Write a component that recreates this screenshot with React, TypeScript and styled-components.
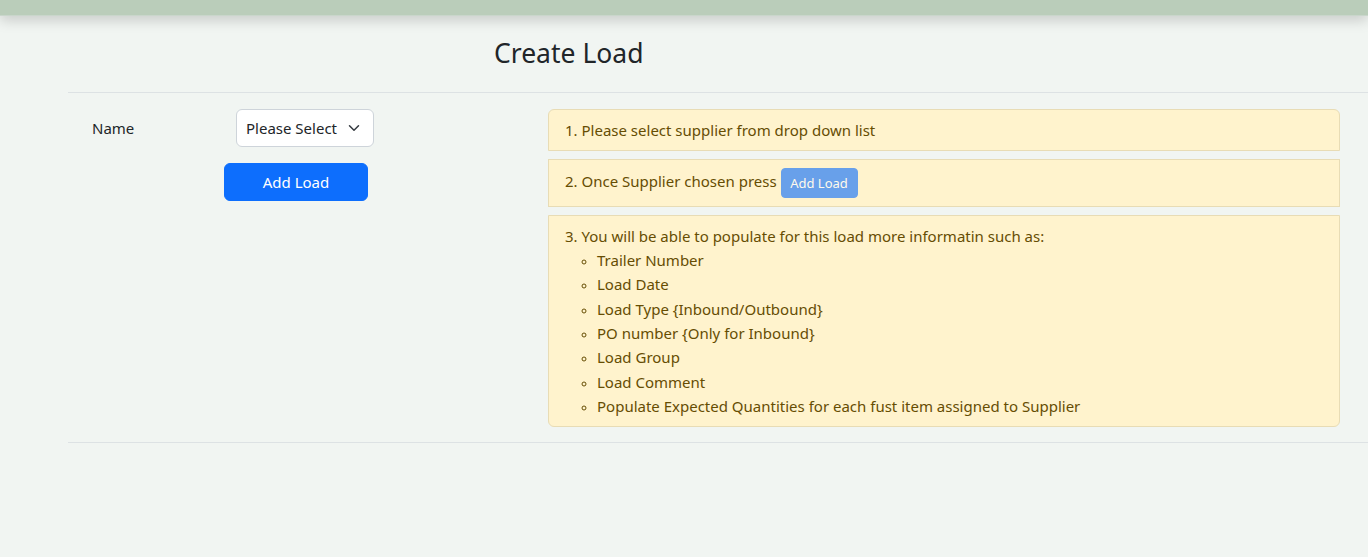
import React from "react";
import styled, { createGlobalStyle } from "styled-components";

const Global = createGlobalStyle`
  html, body { margin: 0; padding: 0; }
  body {
    background: #f1f5f2;
    font-family: "Noto Sans", "Open Sans", sans-serif;
    color: #212529;
    font-size: 16px;
  }
  * { box-sizing: border-box; }
`;

const Page = styled.div`
  min-height: 557px;
  background: #f1f5f2;
`;

const TopBar = styled.div`
  height: 16px;
  background: #bacdba;
  box-shadow: 0 4px 14px rgba(0, 0, 0, 0.18);
  border-bottom: 1px solid #c9d6cb;
`;

const Main = styled.main`
  padding-left: 68px;
`;

const TitleRow = styled.div`
  height: 77px;
  display: flex;
  align-items: center;
  padding-left: 426px;
  padding-bottom: 3px;
  border-bottom: 1px solid #dde2e4;
`;

const Title = styled.h3`
  margin: 0;
  font-size: 26.5px;
  font-weight: 400;
  color: #212529;
`;

const Body = styled.div`
  display: grid;
  grid-template-columns: 480px 792px;
  padding: 16px 0 15px;
  border-bottom: 1px solid #dde2e4;
`;

const FormCol = styled.div`
  display: flex;
  flex-direction: column;
  gap: 16px;
`;

const FieldRow = styled.div`
  display: flex;
  align-items: center;
  padding-left: 24px;
`;

const Label = styled.label`
  width: 144px;
  font-size: 15px;
`;

const SelectBox = styled.div`
  display: inline-flex;
  align-items: center;
  gap: 11px;
  height: 38px;
  width: 138px;
  padding: 0 12px 0 9px;
  background: #fff;
  border: 1px solid #ced4da;
  border-radius: 6px;
  font-size: 15px;
  color: #212529;
`;

const ButtonRow = styled.div`
  padding-left: 156px;
`;

const PrimaryButton = styled.button<{ $small?: boolean; $disabled?: boolean }>`
  font-family: inherit;
  background: #0d6efd;
  color: #fff;
  border: 1px solid #0d6efd;
  border-radius: ${(p) => (p.$small ? "4px" : "6px")};
  font-size: ${(p) => (p.$small ? "13px" : "15px")};
  height: ${(p) => (p.$small ? "30px" : "38px")};
  width: ${(p) => (p.$small ? "77px" : "144px")};
  padding: 0;
  opacity: ${(p) => (p.$disabled ? 0.62 : 1)};
  vertical-align: middle;
`;

const Steps = styled.div`
  display: flex;
  flex-direction: column;
  gap: 8px;
`;

const Step = styled.div<{ $pos: "first" | "mid" | "last" }>`
  background: #fff3cd;
  border: 1px solid #e8dcb5;
  color: #664d03;
  padding: 8px 16px;
  font-size: 15px;
  line-height: 24px;
  border-radius: ${(p) =>
    p.$pos === "first" ? "6px 6px 0 0" : p.$pos === "last" ? "0 0 6px 6px" : "0"};
`;

const SubList = styled.ul`
  margin: 0;
  padding-left: 32px;
  list-style: circle;
  li { line-height: 24.35px; }
  li::marker { font-size: 11px; }
`;

const Chevron = () => (
  <svg width="12" height="12" viewBox="0 0 16 16" fill="none" stroke="#343a40" strokeWidth="2" strokeLinecap="round" strokeLinejoin="round">
    <path d="M2 5l6 6 6-6" />
  </svg>
);

export default function App() {
  const items = [
    "Trailer Number",
    "Load Date",
    "Load Type {Inbound/Outbound}",
    "PO number {Only for Inbound}",
    "Load Group",
    "Load Comment",
    "Populate Expected Quantities for each fust item assigned to Supplier",
  ];
  return (
    <Page>
      <Global />
      <TopBar />
      <Main>
        <TitleRow>
          <Title>Create Load</Title>
        </TitleRow>
        <Body>
          <FormCol>
            <FieldRow>
              <Label>Name</Label>
              <SelectBox>
                Please Select <Chevron />
              </SelectBox>
            </FieldRow>
            <ButtonRow>
              <PrimaryButton>Add Load</PrimaryButton>
            </ButtonRow>
          </FormCol>
          <Steps>
            <Step $pos="first">1. Please select supplier from drop down list</Step>
            <Step $pos="mid">
              2. Once Supplier chosen press <PrimaryButton $small $disabled>Add Load</PrimaryButton>
            </Step>
            <Step $pos="last">
              3. You will be able to populate for this load more informatin such as:
              <SubList>
                {items.map((t) => (
                  <li key={t}>{t}</li>
                ))}
              </SubList>
            </Step>
          </Steps>
        </Body>
      </Main>
    </Page>
  );
}
